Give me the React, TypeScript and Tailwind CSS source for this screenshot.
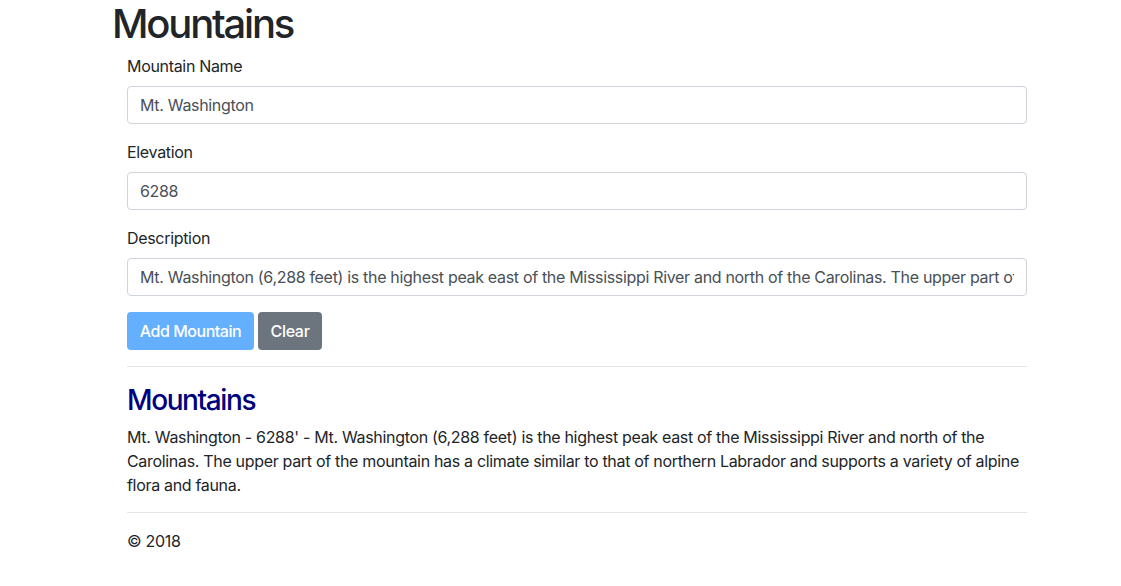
import React from "react";

const desc =
  "Mt. Washington (6,288 feet) is the highest peak east of the Mississippi River and north of the Carolinas. The upper part of the mountain has a climate similar to that of northern Labrador and supports a variety of alpine flora and fauna.";

function Field({ label, value }: { label: string; value: string }) {
  return (
    <div className="mb-4">
      <label className="block mb-2 text-[16px] leading-6 text-[#212529]">{label}</label>
      <input
        readOnly
        value={value}
        className="block w-full h-[38px] px-3 py-1.5 text-[16px] leading-6 tracking-[-0.02em] text-[#495057] bg-white border border-[#ced4da] rounded-[4px] outline-none"
        style={{ fontFamily: "inherit" }}
      />
    </div>
  );
}

export default function App() {
  return (
    <div
      className="min-h-[586px] bg-white text-[#212529] tracking-[-0.02em]"
      style={{ fontFamily: "Inter, 'Noto Sans', sans-serif" }}
    >
      <div className="ml-[112px] w-[930px]">
        <h1 className="text-[40px] leading-[48px] font-medium tracking-[-0.055em] mb-[6px] text-[#212529]">
          Mountains
        </h1>
        <div className="px-[15px]">
          <Field label="Mountain Name" value="Mt. Washington" />
          <Field label="Elevation" value="6288" />
          <Field label="Description" value={desc} />
          <div className="flex gap-1">
            <button className="h-[38px] w-[127px] rounded-[4px] bg-[#007bff] opacity-60 text-white text-[16px] leading-6 font-medium tracking-[-0.03em]">
              Add Mountain
            </button>
            <button className="h-[38px] w-[64px] rounded-[4px] bg-[#6c757d] text-white text-[16px] leading-6 font-medium tracking-[-0.02em]">
              Clear
            </button>
          </div>
          <hr className="my-4 border-t border-[#e5e5e5]" />
          <h3 className="text-[28px] leading-[34px] font-medium tracking-[-0.05em] mb-2 text-[#000080]">
            Mountains
          </h3>
          <p className="text-[16px] leading-6 mb-[15px] whitespace-nowrap">
            Mt. Washington - 6288' - Mt. Washington (6,288 feet) is the highest peak east of the Mississippi River and north of the
            <br />
            Carolinas. The upper part of the mountain has a climate similar to that of northern Labrador and supports a variety of alpine
            <br />
            flora and fauna.
          </p>
          <hr className="mt-0 mb-4 border-t border-[#e5e5e5]" />
          <p className="text-[16px] leading-6">© 2018</p>
        </div>
      </div>
    </div>
  );
}
